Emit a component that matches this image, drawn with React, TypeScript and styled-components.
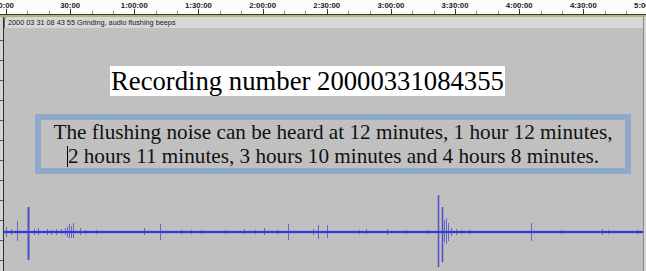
import React from "react";
import styled, { createGlobalStyle } from "styled-components";

const GlobalStyle = createGlobalStyle`
  html, body { margin: 0; padding: 0; background: #d4d4d4; }
  #root { width: 646px; height: 271px; }
`;

const Page = styled.div`
  width: 646px;
  height: 271px;
  display: flex;
  flex-direction: column;
  overflow: hidden;
  background: #d4d4d4;
`;

const Ruler = styled.div`
  position: relative;
  height: 14px;
  background: #fbfbfb;
  flex: none;
`;

const RulerLabel = styled.span`
  position: absolute;
  top: 1px;
  transform: translateX(-50%);
  font-family: "Liberation Sans", Arial, sans-serif;
  font-weight: bold;
  font-size: 7.8px;
  line-height: 9px;
  color: #222;
  white-space: nowrap;
`;

const RulerTicks = styled.svg`
  position: absolute;
  left: 0;
  bottom: 0;
`;

const RuleLine = styled.div`
  flex: none;
  height: 1px;
  background: #3a3a3a;
  border-bottom: 2px solid #b4b27a;
`;

const TrackRow = styled.div`
  flex: 1;
  display: flex;
  min-height: 0;
`;

const VScale = styled.svg`
  flex: none;
  display: block;
`;

const Track = styled.div`
  flex: none;
  width: 639px;
  display: flex;
  flex-direction: column;
  background: #c0c0c0;
  border-right: 1px solid #8a8a8a;
`;

const TrackHeader = styled.div`
  flex: none;
  height: 11px;
  background: #d8d8d8;
  font-family: "Liberation Sans", Arial, sans-serif;
  font-size: 7.3px;
  line-height: 11px;
  color: #202020;
  padding-left: 3px;
  white-space: nowrap;
  border-left: 1px solid #606060;
  border-top-left-radius: 3px;
`;

const Body = styled.div`
  flex: 1;
  display: flex;
  flex-direction: column;
  align-items: flex-start;
  min-height: 0;
`;

const Title = styled.div`
  margin-top: 38px;
  margin-left: 106px;
  background: #ffffff;
  font-family: "Liberation Serif", "Times New Roman", serif;
  font-size: 26.7px;
  line-height: 30px;
  color: #000;
  white-space: nowrap;
  padding: 0 1px;
`;

const NoteBox = styled.div`
  margin-top: 18px;
  margin-left: 31px;
  width: 596px;
  height: 60px;
  box-sizing: border-box;
  border: 6px solid #8ea9c9;
  display: flex;
  flex-direction: column;
  align-items: center;
  justify-content: center;
  font-family: "Liberation Serif", "Times New Roman", serif;
  font-size: 21.2px;
  line-height: 24px;
  color: #111;
`;

const NoteLine = styled.div`
  white-space: nowrap;
`;

const Caret = styled.span`
  display: inline-block;
  width: 1px;
  height: 21px;
  background: #000;
  vertical-align: -4px;
`;

const Wave = styled.svg`
  display: block;
  margin-top: auto;
  flex: none;
`;

const labels = [
  "0:00", "30:00", "1:00:00", "1:30:00", "2:00:00", "2:30:00",
  "3:00:00", "3:30:00", "4:00:00", "4:30:00", "5:00:00",
];
const X0 = 6;
const STEP = 64.15;

type Spike = [number, number, number, number?];
// x, up, down, width
const spikes: Spike[] = [
  [5, 5, 5], [10, 3, 3], [16, 11, 9], [27, 25, 28, 2], [33, 3, 3], [37, 4, 3],
  [46, 3, 3], [50, 2, 3], [55, 3, 3], [60, 3, 2], [64, 4, 3], [66, 5, 5],
  [68, 8, 6], [70, 6, 6], [72, 9, 6], [79, 4, 3], [84, 2, 2], [95, 2, 2],
  [143, 4, 3], [159, 8, 8], [180, 2, 2], [190, 2, 2], [200, 2, 2],
  [224, 2, 2], [243, 3, 2], [254, 2, 2], [263, 4, 3], [276, 2, 2], [287, 8, 8],
  [312, 3, 3], [317, 7, 7], [326, 7, 6], [358, 2, 2], [365, 3, 2], [386, 3, 3],
  [405, 2, 2], [427, 2, 2],
  [437, 37, 35, 1.5], [441, 25, 30, 1.5], [443, 12, 10], [445, 14, 12], [447, 9, 9],
  [450, 4, 4], [455, 3, 3], [460, 2, 2], [468, 2, 2],
  [530, 9, 9], [560, 2, 2], [601, 3, 3], [607, 2, 2], [636, 2, 2],
];

const BASE = 44;

export default function App() {
  const minor: number[] = [];
  for (let i = 0; i <= 30; i++) minor.push(X0 + (i * STEP) / 3);
  return (
    <Page>
      <GlobalStyle />
      <Ruler>
        <RulerTicks width={646} height={5}>
          {minor.map((x, i) => (
            <line
              key={i}
              x1={Math.round(x) + 0.5}
              x2={Math.round(x) + 0.5}
              y1={i % 3 === 0 ? 0 : 2}
              y2={5}
              stroke={i % 3 === 0 ? "#333" : "#888"}
              strokeWidth={1}
            />
          ))}
        </RulerTicks>
        {labels.map((l, i) => (
          <RulerLabel key={l} style={{ left: X0 + i * STEP }}>
            {l}
          </RulerLabel>
        ))}
      </Ruler>
      <RuleLine />
      <TrackRow>
        <VScale width={4} height={254}>
          <line x1={3.5} x2={3.5} y1={0} y2={254} stroke="#303030" />
          {Array.from({ length: 13 }, (_, i) => 23 + i * 20).map((y) => (
            <line key={y} x1={0} x2={3} y1={y + 0.5} y2={y + 0.5} stroke="#505050" />
          ))}
        </VScale>
        <Track>
          <TrackHeader>2000 03 31 08 43 55 Grinding, audio flushing beeps</TrackHeader>
          <Body>
            <Title>Recording number 20000331084355</Title>
            <NoteBox>
              <NoteLine>The flushing noise can be heard at 12 minutes, 1 hour 12 minutes,</NoteLine>
              <NoteLine>
                <Caret />2 hours 11 minutes, 3 hours 10 minutes and 4 hours 8 minutes.
              </NoteLine>
            </NoteBox>
            <Wave width={639} height={83}>
              <rect x={0} y={BASE - 2} width={639} height={4} fill="#a8a8dc" />
              {spikes.map(([x, u, d, w], i) => (
                <line
                  key={i}
                  x1={x - 3 + 0.5}
                  x2={x - 3 + 0.5}
                  y1={BASE - u}
                  y2={BASE + d}
                  stroke="#4848c8"
                  strokeWidth={w ?? 1}
                  opacity={u > 20 ? 0.95 : 0.75}
                />
              ))}
              <rect x={0} y={BASE - 1} width={639} height={2} fill="#3a3ac4" />
            </Wave>
          </Body>
        </Track>
      </TrackRow>
    </Page>
  );
}
